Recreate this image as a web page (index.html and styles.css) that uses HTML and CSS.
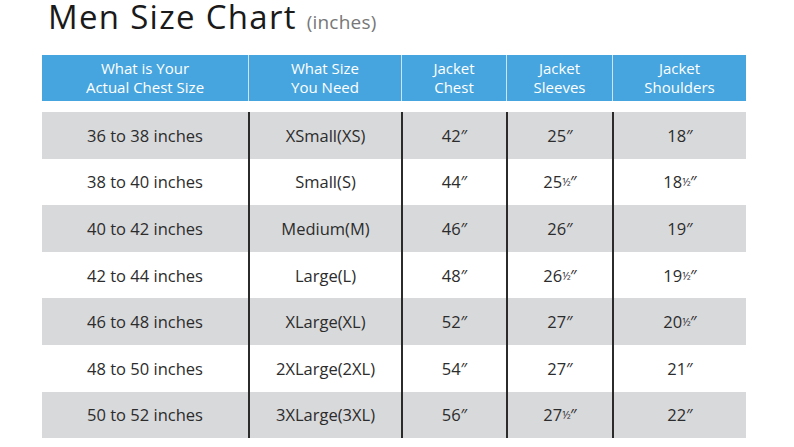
FILE: index.html
```html
<!DOCTYPE html>
<html>
<head>
<meta charset="utf-8">
<link rel="stylesheet" href="styles.css">
</head>
<body>
<div class="page">
  <h1 class="title">Men Size Chart <span class="unit">(inches)</span></h1>
  <div class="chart">
    <div class="head">
      <div class="hcell">What is Your<br>Actual Chest Size</div>
      <div class="hcell">What Size<br>You Need</div>
      <div class="hcell">Jacket<br>Chest</div>
      <div class="hcell">Jacket<br>Sleeves</div>
      <div class="hcell">Jacket<br>Shoulders</div>
    </div>
    <div class="body">
      <div class="row gray"><div class="cell">36 to 38 inches</div><div class="cell">XSmall(XS)</div><div class="cell">42″</div><div class="cell">25″</div><div class="cell">18″</div></div>
      <div class="row"><div class="cell">38 to 40 inches</div><div class="cell">Small(S)</div><div class="cell">44″</div><div class="cell">25<span class="frac">½</span>″</div><div class="cell">18<span class="frac">½</span>″</div></div>
      <div class="row gray"><div class="cell">40 to 42 inches</div><div class="cell">Medium(M)</div><div class="cell">46″</div><div class="cell">26″</div><div class="cell">19″</div></div>
      <div class="row"><div class="cell">42 to 44 inches</div><div class="cell">Large(L)</div><div class="cell">48″</div><div class="cell">26<span class="frac">½</span>″</div><div class="cell">19<span class="frac">½</span>″</div></div>
      <div class="row gray"><div class="cell">46 to 48 inches</div><div class="cell">XLarge(XL)</div><div class="cell">52″</div><div class="cell">27″</div><div class="cell">20<span class="frac">½</span>″</div></div>
      <div class="row"><div class="cell">48 to 50 inches</div><div class="cell">2XLarge(2XL)</div><div class="cell">54″</div><div class="cell">27″</div><div class="cell">21″</div></div>
      <div class="row gray"><div class="cell">50 to 52 inches</div><div class="cell">3XLarge(3XL)</div><div class="cell">56″</div><div class="cell">27<span class="frac">½</span>″</div><div class="cell">22″</div></div>
    </div>
  </div>
</div>
</body>
</html>
```
FILE: styles.css
```css
html, body {
  margin: 0;
  padding: 0;
  background: #ffffff;
}
.page {
  width: 794px;
  height: 447px;
  font-family: "Open Sans", "Noto Sans", sans-serif;
  color: #2a2a2a;
  overflow: hidden;
}
.title {
  margin: 0;
  padding: 0 0 0 48px;
  height: 55px;
  font-weight: 400;
  font-size: 33px;
  line-height: 34px;
  letter-spacing: 1.3px;
  color: #1a1a1a;
}
.unit {
  font-size: 19px;
  letter-spacing: 0.2px;
  color: #777;
}
.chart {
  margin-left: 42px;
  width: 704px;
}
.head, .row {
  display: grid;
  grid-template-columns: 206px 153px 105px 106px 134px;
}
.head {
  height: 46px;
  background: #46a5de;
}
.hcell {
  display: flex;
  align-items: center;
  justify-content: center;
  text-align: center;
  color: #ffffff;
  font-size: 15px;
  line-height: 19px;
  padding-bottom: 1px;
}
.hcell + .hcell {
  border-left: 1px solid #cfe5f5;
}
.body {
  margin-top: 11px;
}
.row {
  height: 46.6px;
  background: #ffffff;
}
.row.gray {
  background: #d8d9db;
}
.cell {
  display: flex;
  align-items: center;
  justify-content: center;
  font-size: 16.5px;
  color: #2c2c2c;
}
.cell + .cell {
  border-left: 2px solid #2b2b2b;
}
.frac {
  font-size: 11px;
  vertical-align: 2px;
  letter-spacing: -0.5px;
}
```
